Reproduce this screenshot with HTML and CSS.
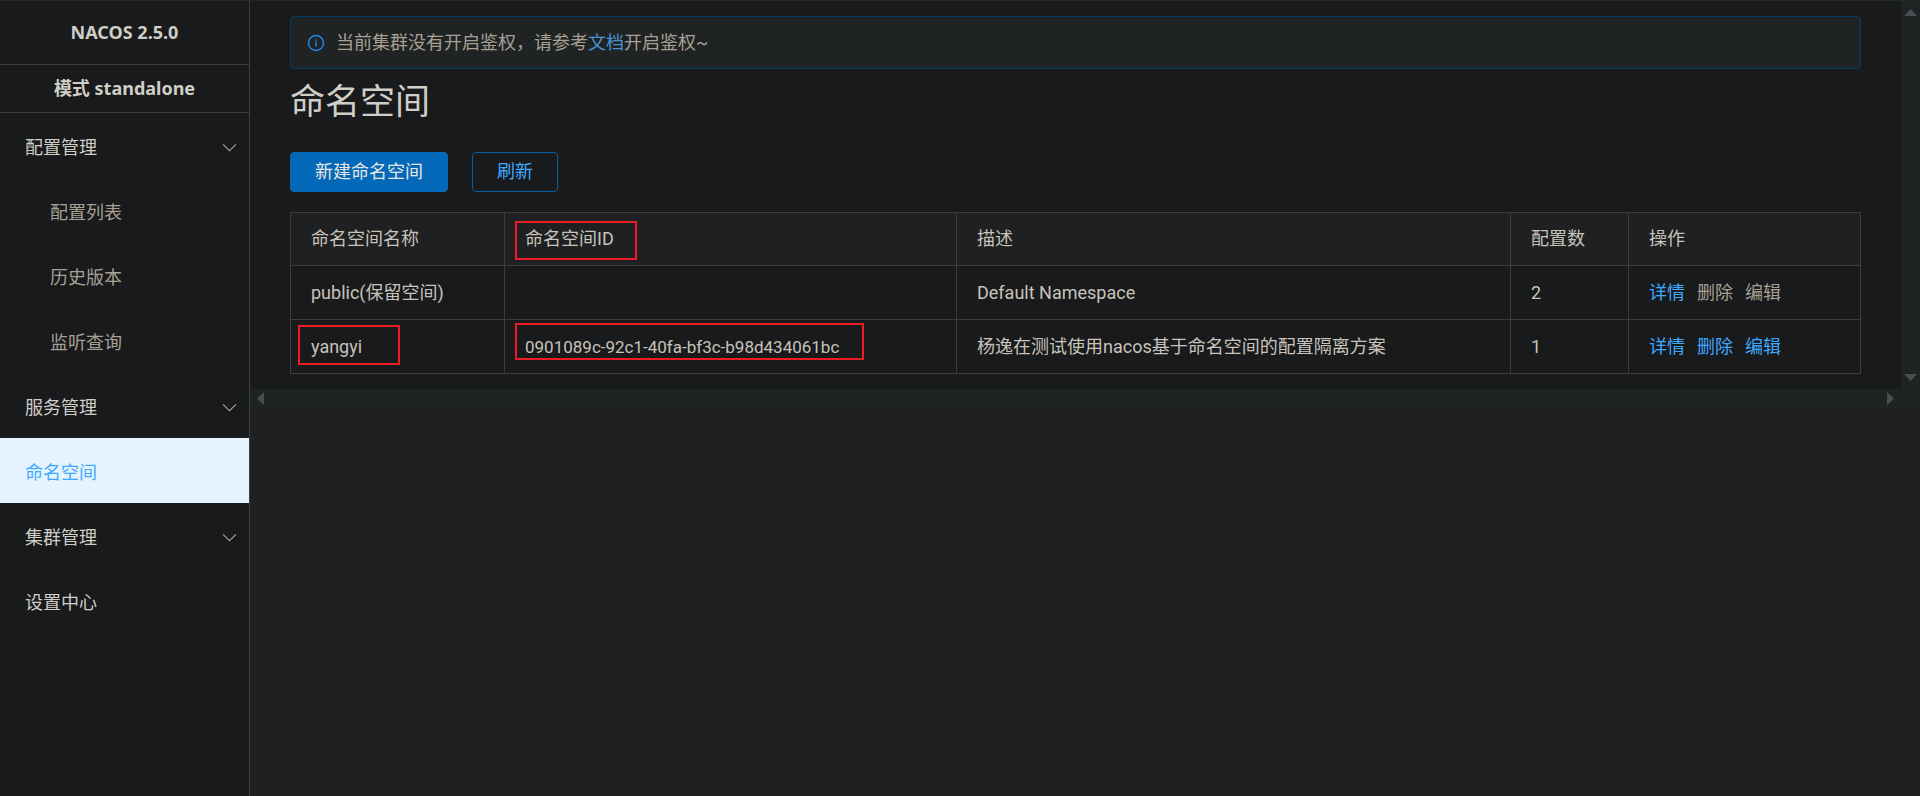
FILE: index.html
```html
<!DOCTYPE html>
<html lang="zh-CN">
<head>
<meta charset="utf-8">
<title>NACOS - 命名空间</title>
<link rel="stylesheet" href="styles.css">
</head>
<body>
<div class="app">
  <aside class="sidebar">
    <div class="brand">NACOS 2.5.0</div>
    <div class="mode">模式 standalone</div>
    <nav>
      <ul class="menu">
        <li><a class="menu-item" href="#config">配置管理<svg class="chevron" viewBox="0 0 14 8"><path d="M1 1l6 6 6-6"/></svg></a>
          <ul class="submenu">
            <li><a class="menu-item sub" href="#list">配置列表</a></li>
            <li><a class="menu-item sub" href="#history">历史版本</a></li>
            <li><a class="menu-item sub" href="#listen">监听查询</a></li>
          </ul>
        </li>
        <li><a class="menu-item" href="#service">服务管理<svg class="chevron" viewBox="0 0 14 8"><path d="M1 1l6 6 6-6"/></svg></a></li>
        <li><a class="menu-item active" href="#namespace" aria-current="page">命名空间</a></li>
        <li><a class="menu-item" href="#cluster">集群管理<svg class="chevron" viewBox="0 0 14 8"><path d="M1 1l6 6 6-6"/></svg></a></li>
        <li><a class="menu-item" href="#settings">设置中心</a></li>
      </ul>
    </nav>
  </aside>
  <div class="viewport">
    <main class="content">
      <div class="notice" role="status">
        <svg class="info" viewBox="0 0 18 18"><circle cx="9" cy="9" r="7.5"/><path d="M9 5.5v1.2M9 7.6v5"/></svg>
        <p class="notice-text">当前集群没有开启鉴权，请参考<a class="doc-link" href="#docs">文档</a>开启鉴权~</p>
      </div>
      <h1 class="title">命名空间</h1>
      <div class="toolbar">
        <button class="btn primary" type="button">新建命名空间</button>
        <button class="btn" type="button">刷新</button>
      </div>
      <table class="table">
        <colgroup><col class="col-name"><col class="col-id"><col><col class="col-count"><col class="col-actions"></colgroup>
        <thead>
          <tr><th>命名空间名称</th><th>命名空间ID<span class="mark mark-head"></span></th><th>描述</th><th>配置数</th><th>操作</th></tr>
        </thead>
        <tbody>
          <tr>
            <td>public(保留空间)</td><td></td><td>Default Namespace</td><td>2</td>
            <td><div class="actions"><a href="#detail">详情</a><span class="disabled">删除</span><span class="disabled">编辑</span></div></td>
          </tr>
          <tr>
            <td>yangyi<span class="mark mark-name"></span></td><td class="uuid">0901089c-92c1-40fa-bf3c-b98d434061bc<span class="mark mark-id"></span></td><td>杨逸在测试使用nacos基于命名空间的配置隔离方案</td><td>1</td>
            <td><div class="actions"><a href="#detail">详情</a><a href="#delete">删除</a><a href="#edit">编辑</a></div></td>
          </tr>
        </tbody>
      </table>
    </main>
    <div class="bar bar-y">
      <button class="arrow" type="button" aria-label="向上滚动"><svg width="13" height="7" viewBox="0 0 13 7"><path d="M0 7L6.500 0 13 7z"/></svg></button>
      <button class="arrow" type="button" aria-label="向下滚动"><svg width="13" height="7" viewBox="0 0 13 7"><path d="M0 0h13L6.500 7z"/></svg></button>
    </div>
    <div class="bar bar-x">
      <button class="arrow" type="button" aria-label="向左滚动"><svg width="7" height="13" viewBox="0 0 7 13"><path d="M7 0v13L0 6.500z"/></svg></button>
      <button class="arrow" type="button" aria-label="向右滚动"><svg width="7" height="13" viewBox="0 0 7 13"><path d="M0 0v13l7-6.500z"/></svg></button>
    </div>
  </div>
</div>
</body>
</html>
```
FILE: styles.css
```css
* { box-sizing: border-box; }

body {
  margin: 0;
  background: #1e2021;
  color: #c8c3bc;
  font: 18px/22px Roboto, "Noto Sans CJK SC", sans-serif;
}

a { color: #3fa9ff; text-decoration: none; }
ul { margin: 0; padding: 0; list-style: none; }

.app {
  display: flex;
  min-height: 100vh;
  border-top: 1px solid #232627;
}

.sidebar {
  flex: 0 0 250px;
  background: #181a1b;
  border-right: 1px solid #3a3e41;
}

.brand, .mode {
  border-bottom: 1px solid #3a3e41;
  color: #d1cdc7;
  font-family: "Noto Sans", "Noto Sans CJK SC", sans-serif;
  font-weight: 700;
  text-align: center;
}
.brand { line-height: 63px; }
.mode { line-height: 47px; }

.menu-item {
  display: flex;
  align-items: center;
  justify-content: space-between;
  height: 65px;
  padding: 4px 12px 0 25px;
  color: #d1cdc7;
}
.menu-item.sub { padding-left: 50px; color: #a8a095; }
.menu-item.active { background: #e4f3fe; color: #3fa9ff; }

.chevron {
  width: 15px;
  height: 9px;
  fill: none;
  stroke: #a8a095;
}

.viewport {
  flex: 1;
  min-width: 0;
  display: grid;
  grid-template-columns: 1fr 19px;
  grid-template-rows: auto 19px;
  align-content: start;
}

.content {
  padding: 15px 40px;
  background: #181a1b;
}

.notice {
  display: flex;
  align-items: flex-start;
  gap: 11px;
  padding: 14px 16px;
  border: 1px solid #003e6c;
  border-radius: 4px;
  background: #202324;
}
.info {
  width: 18px;
  height: 18px;
  margin-top: 3px;
  fill: none;
  stroke: #2389ee;
  stroke-width: 1.4;
}
.notice-text { margin: 0; line-height: 23px; color: #a8a095; }
.doc-link { color: #4b93d6; }

.title {
  margin: 10px 0 25px;
  color: #d1cdc7;
  font-size: 35px;
  font-weight: 400;
  line-height: 48px;
}

.toolbar {
  display: flex;
  gap: 24px;
  margin-bottom: 20px;
}
.btn {
  height: 40px;
  padding: 0 24px;
  border: 1px solid #0060a8;
  border-radius: 4px;
  background: transparent;
  color: #3fa9ff;
  font: inherit;
}
.btn.primary { background: #0368b8; border-color: #0368b8; color: #e8e6e3; }

.table {
  width: 100%;
  table-layout: fixed;
  border-collapse: collapse;
}
.col-name { width: 214px; }
.col-id { width: 452px; }
.col-count { width: 118px; }
.col-actions { width: 232px; }
.table th, .table td {
  position: relative;
  height: 53px;
  padding: 0 20px;
  border: 1px solid #3a3e41;
  font-weight: 400;
  text-align: left;
  white-space: nowrap;
}
.table td { height: 54px; }
.table th { background: #1e2021; }
.table .uuid { font-size: 17px; }

.actions { display: flex; gap: 12px; }
.disabled { color: #a8a095; }

/* Highlight frames laid over cells */
.mark {
  position: absolute;
  left: 10px;
  top: 8px;
  height: 39px;
  border: 2px solid #ed1c24;
}
.mark-head { width: 122px; }
.mark-name { left: 7px; top: 5px; width: 102px; height: 40px; }
.mark-id { top: 3px; width: 349px; height: 37px; }

.bar {
  display: flex;
  justify-content: space-between;
  background: #202324;
}
.bar-y { flex-direction: column; align-items: center; padding: 8px 0; }
.bar-x { grid-column: 1 / -1; align-items: center; padding: 0 26px 0 7px; }
.arrow {
  display: flex;
  padding: 0;
  border: 0;
  background: none;
}
.arrow svg { fill: #4a4e51; }
```
